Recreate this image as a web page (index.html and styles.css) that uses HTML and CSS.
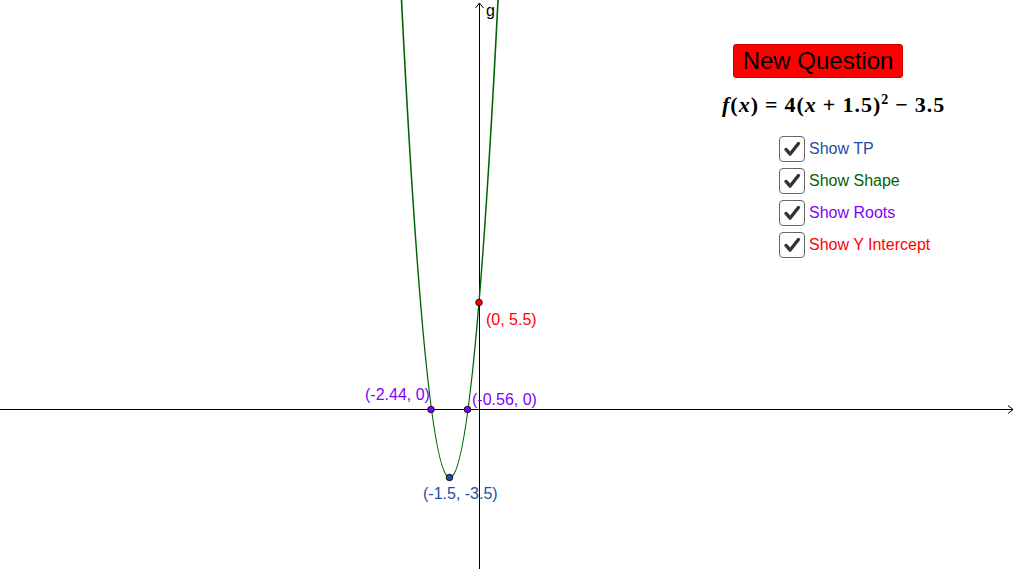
FILE: index.html
```html
<!DOCTYPE html>
<html>
<head>
<meta charset="utf-8">
<link rel="stylesheet" href="styles.css">
</head>
<body>
<div class="stage">
  <svg class="graph" width="1016" height="569" viewBox="0 0 1016 569">
    <g stroke="#000" stroke-width="1" fill="none">
      <line x1="479.5" y1="569" x2="479.5" y2="3"/>
      <polyline points="475.5,8 479.5,3 483.5,8"/>
      <line x1="0" y1="409.5" x2="1013" y2="409.5"/>
      <polyline points="1008,405.5 1013,409.5 1008,413.5"/>
    </g>
    <path d="M399.05,-49.53 Q449.75,1005.03 500.45,-49.53" fill="none" stroke="#006400" stroke-width="1.6"/>
    <text x="486" y="16" class="lbl" fill="#000">g</text>
    <circle cx="479" cy="302.5" r="3.3" fill="#ff0000" stroke="#000" stroke-width="0.8"/>
    <circle cx="431" cy="409.5" r="3.3" fill="#7f00ff" stroke="#000" stroke-width="0.8"/>
    <circle cx="467.5" cy="409.5" r="3.3" fill="#7f00ff" stroke="#000" stroke-width="0.8"/>
    <circle cx="449.5" cy="477.5" r="3.3" fill="#1c4fa6" stroke="#000" stroke-width="0.8"/>
    <text x="486" y="325" class="lbl" fill="#ff0000">(0, 5.5)</text>
    <text x="365" y="400" class="lbl" fill="#7f00ff">(-2.44, 0)</text>
    <text x="472" y="405" class="lbl" fill="#7f00ff">(-0.56, 0)</text>
    <text x="423" y="499" class="lbl" fill="#1c4fa6">(-1.5, -3.5)</text>
  </svg>
  <div class="panel">
    <button class="newq">New Question</button>
    <div class="formula"><i>f</i>(<i>x</i>)<span class="op">=</span>4(<i>x</i><span class="op">+</span>1.5)<sup>2</sup><span class="op">−</span>3.5</div>
    <div class="checks">
      <label class="row tp"><span class="box"><svg viewBox="0 0 26 26" width="26" height="26"><path d="M6.5 13.5 L11 18.5 L20 7" fill="none" stroke="#333" stroke-width="3.6" stroke-linecap="round" stroke-linejoin="round"/></svg></span>Show TP</label>
      <label class="row shape"><span class="box"><svg viewBox="0 0 26 26" width="26" height="26"><path d="M6.5 13.5 L11 18.5 L20 7" fill="none" stroke="#333" stroke-width="3.6" stroke-linecap="round" stroke-linejoin="round"/></svg></span>Show Shape</label>
      <label class="row roots"><span class="box"><svg viewBox="0 0 26 26" width="26" height="26"><path d="M6.5 13.5 L11 18.5 L20 7" fill="none" stroke="#333" stroke-width="3.6" stroke-linecap="round" stroke-linejoin="round"/></svg></span>Show Roots</label>
      <label class="row yint"><span class="box"><svg viewBox="0 0 26 26" width="26" height="26"><path d="M6.5 13.5 L11 18.5 L20 7" fill="none" stroke="#333" stroke-width="3.6" stroke-linecap="round" stroke-linejoin="round"/></svg></span>Show Y Intercept</label>
    </div>
  </div>
</div>
</body>
</html>
```
FILE: styles.css
```css
html, body {
  margin: 0;
  padding: 0;
  background: #fff;
}
body {
  font-family: "Liberation Sans", Arial, sans-serif;
}
.stage {
  position: relative;
  width: 1016px;
  height: 569px;
  overflow: hidden;
}
.graph {
  position: absolute;
  left: 0;
  top: 0;
  display: block;
}
.lbl {
  font-family: "Liberation Sans", Arial, sans-serif;
  font-size: 16px;
}
.panel {
  position: absolute;
  left: 722px;
  top: 44px;
  width: 270px;
  display: flex;
  flex-direction: column;
  align-items: flex-start;
}
.newq {
  margin-left: 11px;
  width: 170px;
  height: 34px;
  background: #ff0000;
  border: 1px solid #c80000;
  border-radius: 3px;
  color: #000;
  font-family: "Liberation Sans", Arial, sans-serif;
  font-size: 24px;
  padding: 0;
  line-height: 32px;
}
.formula {
  margin-top: 14px;
  font-family: "Liberation Serif", "Times New Roman", serif;
  font-weight: bold;
  font-size: 22px;
  letter-spacing: 1px;
  line-height: 26px;
  white-space: nowrap;
  color: #000;
}
.formula .op {
  margin: 0 6px;
}
.formula sup {
  font-size: 14px;
  line-height: 0;
  vertical-align: 8px;
}
.checks {
  margin-top: 18px;
  margin-left: 57px;
  display: flex;
  flex-direction: column;
  gap: 6px;
}
.row {
  display: flex;
  align-items: center;
  height: 26px;
  font-size: 16px;
}
.box {
  width: 24px;
  height: 24px;
  border: 1px solid #666;
  border-radius: 4px;
  margin-right: 4px;
  display: flex;
  align-items: center;
  justify-content: center;
  box-sizing: content-box;
}
.box svg {
  display: block;
  width: 24px;
  height: 24px;
}
.tp { color: #1c4fa6; }
.shape { color: #006400; }
.roots { color: #7f00ff; }
.yint { color: #ff0000; }
```
